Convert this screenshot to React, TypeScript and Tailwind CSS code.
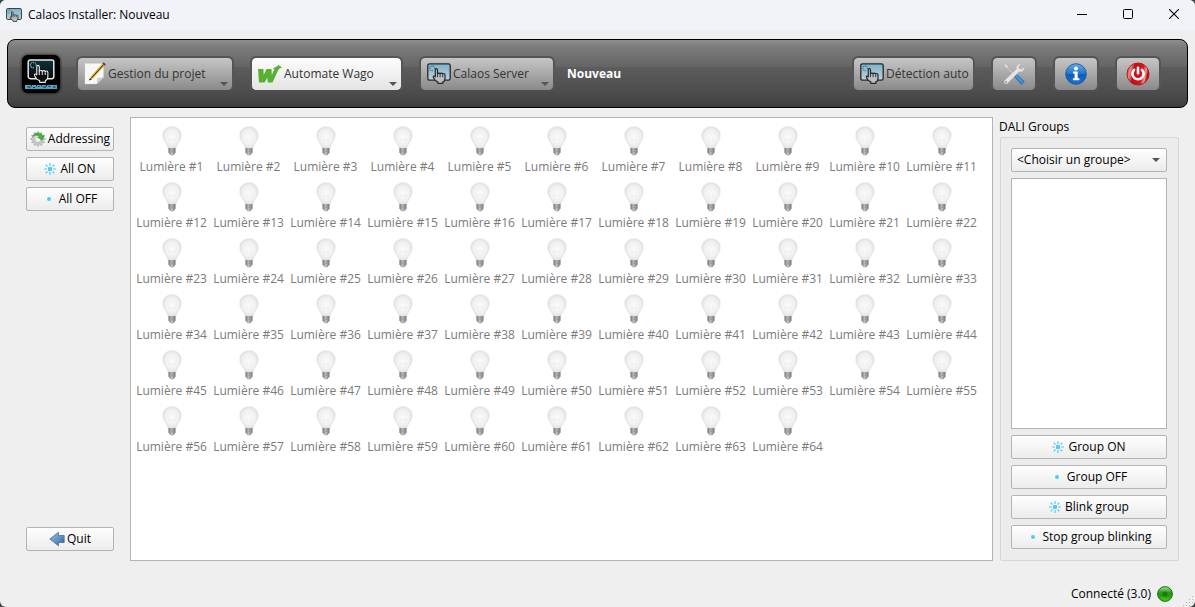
import React from "react";

const lights = Array.from({ length: 64 }, (_, i) => `Lumière #${i + 1}`);

function HandIcon({ className, light = false }: { className: string; light?: boolean }) {
  const line = light ? "#e8e8e8" : "#26292b";
  return (
    <svg viewBox="0 0 24 21" className={className} aria-hidden="true">
      <defs>
        <linearGradient id={light ? "screenDark" : "screenBlue"} x1="0" y1="0" x2="0" y2="1">
          <stop offset="0" stopColor={light ? "#123039" : "#79b5cc"} />
          <stop offset="1" stopColor={light ? "#070b0c" : "#c2d0d5"} />
        </linearGradient>
      </defs>
      <rect x="0.8" y="0.8" width="22.4" height="16.4" rx="1.8" fill={light ? "url(#screenDark)" : "url(#screenBlue)"} stroke={line} strokeWidth="1.3" />
      <g fill={light ? "#8fd0e4" : "#2f6478"}>
        <circle cx="5.2" cy="2.9" r="0.6" />
        <circle cx="5.2" cy="7.7" r="0.6" />
        <circle cx="2.8" cy="5.3" r="0.6" />
        <circle cx="7.6" cy="5.3" r="0.6" />
        <circle cx="3.5" cy="3.6" r="0.6" />
        <circle cx="6.9" cy="3.6" r="0.6" />
        <circle cx="3.5" cy="7" r="0.6" />
      </g>
      <path
        d="M8.3 13.8V6.9q0-1.3 1.1-1.3t1.1 1.3v4.2q.2-1 1.3-1t1.3.9q.4-.8 1.3-.8t1.3.9q.4-.7 1.2-.6 1.1.1 1.1 1.3v3.6q0 3-2.2 3.5v1.5h-5v-1.5q-3-.8-4.3-4.1-.5-1.5.4-1.7.8-.1 1.4.7z"
        fill={light ? "#0b0f10" : "#b9bfc1"}
        stroke={line}
        strokeWidth={light ? "1" : "1.2"}
        strokeLinejoin="round"
      />
      <path d="M10.5 11v3M13.1 11.4v2.7M15.7 11.7v2.4" stroke={line} strokeWidth="0.9" />
    </svg>
  );
}

function BulbIcon() {
  return (
    <svg viewBox="0 0 20 30" className="h-[30px] w-5" aria-hidden="true">
      <defs>
        <radialGradient id="bulbGlass" cx="0.5" cy="0.5" r="0.6">
          <stop offset="0" stopColor="#fafafa" />
          <stop offset="0.6" stopColor="#f0f0f0" />
          <stop offset="1" stopColor="#d8d8d8" />
        </radialGradient>
        <linearGradient id="bulbCap" x1="0" x2="1">
          <stop offset="0" stopColor="#6c6c6c" />
          <stop offset="0.4" stopColor="#c4c4c4" />
          <stop offset="1" stopColor="#777" />
        </linearGradient>
      </defs>
      <path d="M10 .7c5.200 0 9.200 3.700 9.200 8.700 0 5.300-4.500 8-5.400 12.800H6.200C5.300 17.400.8 14.700.8 9.400.8 4.400 4.800.7 10 .7z" fill="url(#bulbGlass)" stroke="#e0e0e0" strokeWidth="0.7" />
      <path d="M7.300 13l1.200 1M12.700 13l-1.200 1" stroke="#dcdcdc" strokeWidth="0.9" />
      <path d="M6.500 22h7v4.200L12 28.800q-2 1.400-4 0l-1.500-2.600z" fill="url(#bulbCap)" />
      <path d="M6.500 23.900l7-.5M6.700 26l6.600-.5" stroke="#8b8b8b" strokeWidth="0.6" />
    </svg>
  );
}

function SparkIcon() {
  return (
    <svg viewBox="0 0 12 12" className="mr-1 size-3" aria-hidden="true" fill="#4fcbfb">
      <rect x="4" y="4" width="4" height="4" rx="1" />
      <path d="M5.400 0h1.200v3H5.400zM5.400 9h1.200v3H5.400zM0 5.400h3v1.200H0zM9 5.400h3v1.200H9z" />
      <path d="M2 1.200l1.900 1.900-.8.8-1.900-1.900zM10 1.200l.8.8-1.900 1.900-.8-.8zM1.200 10l1.900-1.900.8.8-1.900 1.900zM10.800 10l-.8.8-1.900-1.900.8-.8z" />
    </svg>
  );
}

function DotIcon() {
  return (
    <svg viewBox="0 0 12 12" className="mr-1 size-3" aria-hidden="true">
      <circle cx="6" cy="6" r="2" fill="#4fcbfb" />
    </svg>
  );
}

function GearIcon() {
  const teeth = Array.from({ length: 12 }, (_, i) => i * 30);
  return (
    <svg viewBox="0 0 16 16" className="mr-0.5 size-4 shrink-0" aria-hidden="true">
      {teeth.map((a) => (
        <rect key={a} x="7" y="0.5" width="2" height="3.500" fill="#b3b3bb" transform={`rotate(${a} 8 8)`} />
      ))}
      <circle cx="8" cy="8" r="4.800" fill="none" stroke="#c3c3ca" strokeWidth="3" />
      <circle cx="8" cy="8.500" r="2.800" fill="#fafafa" stroke="#a5a5ac" strokeWidth="0.600" />
      <path d="M2.600 5.600C4.600 1 10.500.8 12.700 5l1.600-.3-2.300 4.600-4.300-3 2-.5C8.300 3.800 5 3.600 2.600 5.600z" fill="#42b638" stroke="#288c25" strokeWidth="0.5" />
    </svg>
  );
}

function NoteIcon() {
  return (
    <svg viewBox="0 0 22 24" className="h-6 w-[22px] shrink-0" aria-hidden="true">
      <path d="M2 22.500h12" stroke="#777" strokeOpacity=".5" strokeWidth="1.500" />
      <path d="M1 1.500h18.500v14L13 22H1z" fill="#f8f8f6" stroke="#d8d8d8" strokeWidth="0.5" />
      <path d="M19.500 15.500c-2 1-4.500 1-6 .7.600 2 .4 4-.5 5.800z" fill="#d2d2d0" stroke="#aaa" strokeWidth="0.500" />
      <path d="M5.300 18.300l1.400-3.500L18.300 1.700l2.400 2L8.700 16.600z" fill="#e1ac36" />
      <path d="M7.500 16L19.500 2.600" stroke="#37321f" strokeWidth="1" />
      <path d="M5 18.600l1-2.600 1.800 1.500z" fill="#222" />
      <path d="M18.300 1.700L19.600.3l2.300 2-1.200 1.400z" fill="#54413d" />
    </svg>
  );
}

function WagoIcon() {
  return (
    <svg viewBox="0 0 24 18" className="h-[18px] w-6 shrink-0" aria-hidden="true">
      <path d="M0 4h5.400l.3 6L8.600 4h4.900l.3 6 2.700-6-2-.5Q18 2.500 20.500 0L24 2.500q-2.800.5-4 3L14.500 17.500H9.800l-.5-5-2.600 5H1z" fill="#58b031" />
    </svg>
  );
}

function ToolsIcon() {
  return (
    <svg viewBox="0 0 22 22" className="size-[22px]" aria-hidden="true">
      <path d="M1.200 1.800l1.600-.8 2 2.200-.1 1.200 8 8.300-.7.800L4.200 5l-1.200-.2z" fill="#eeeeee" stroke="#aaa" strokeWidth=".5" />
      <path d="M10.800 13l2.200-2.200 8.300 7.700-2.700 3z" fill="#3182cd" stroke="#2164a2" strokeWidth=".6" />
      <path d="M13 12.700l6.500 6.300" stroke="#6db2ea" strokeWidth="1" />
      <path d="M18.500.8L15.800 3.400l.5 2.200 2.200.5 2.800-2.700c.8 3.500-1.900 6.300-5.200 5.300L4.500 20.400q-1.500 1.100-2.800-.1t-.2-2.800L13.400 6C12.500 2.700 15 0 18.500.8z" fill="#e6e6e6" stroke="#b2b2b2" strokeWidth=".6" />
      <circle cx="3.100" cy="18.900" r=".9" fill="#909090" />
    </svg>
  );
}

function InfoIcon() {
  return (
    <svg viewBox="0 0 22 22" className="size-[22px]" aria-hidden="true">
      <defs>
        <linearGradient id="infoBall" x1="0" y1="0" x2="0" y2="1">
          <stop offset="0" stopColor="#65a9e9" />
          <stop offset="0.48" stopColor="#2377cc" />
          <stop offset="0.52" stopColor="#0d5ebc" />
          <stop offset="1" stopColor="#1b72ce" />
        </linearGradient>
      </defs>
      <circle cx="11" cy="11" r="10.300" fill="url(#infoBall)" stroke="#1656a0" strokeWidth="0.900" />
      <circle cx="11" cy="5.500" r="2" fill="#fff" />
      <path d="M8 8.600h4.700v6.600h1.700v2H7.900v-2h1.700v-4.600H8z" fill="#fff" />
    </svg>
  );
}

function PowerIcon() {
  return (
    <svg viewBox="0 0 24 24" className="size-6" aria-hidden="true">
      <defs>
        <linearGradient id="powerBall" x1="0" y1="0" x2="1" y2="0.2">
          <stop offset="0" stopColor="#b70d12" />
          <stop offset="0.2" stopColor="#f08c8c" />
          <stop offset="0.36" stopColor="#c20f15" />
          <stop offset="0.75" stopColor="#d2191e" />
          <stop offset="0.9" stopColor="#f09a9a" />
          <stop offset="1" stopColor="#b20d12" />
        </linearGradient>
      </defs>
      <circle cx="12" cy="12" r="11" fill="url(#powerBall)" stroke="#ad1519" strokeWidth="0.900" />
      <path d="M8 7.800a5.600 5.600 0 1 0 8 0" fill="none" stroke="#fff" strokeWidth="2.600" strokeLinecap="round" />
      <path d="M12 5.700v5.500" stroke="#fff" strokeWidth="2.600" strokeLinecap="round" />
    </svg>
  );
}

function BackIcon() {
  return (
    <svg viewBox="0 0 16 16" className="mr-0.5 size-4" aria-hidden="true">
      <defs>
        <linearGradient id="backArrow" x1="0" y1="0" x2="1" y2="1">
          <stop offset="0" stopColor="#9fbddd" />
          <stop offset="0.6" stopColor="#5c8dc2" />
          <stop offset="1" stopColor="#2c548c" />
        </linearGradient>
      </defs>
      <path d="M.8 8L9.500 1.200v3.300h5.700v7H9.500v3.300z" fill="url(#backArrow)" stroke="#48709f" strokeWidth="0.800" strokeLinejoin="round" />
    </svg>
  );
}

function LedIcon() {
  return (
    <svg viewBox="0 0 16 16" className="size-4" aria-hidden="true">
      <defs>
        <linearGradient id="ledBall" x1="0" y1="0" x2="0" y2="1">
          <stop offset="0" stopColor="#a5e3a0" />
          <stop offset="0.4" stopColor="#2b9c1c" />
          <stop offset="0.6" stopColor="#1f9f05" />
          <stop offset="1" stopColor="#46d414" />
        </linearGradient>
      </defs>
      <circle cx="8" cy="8" r="7.400" fill="url(#ledBall)" stroke="#1d6b16" strokeWidth="1" />
      <circle cx="8" cy="8" r="2.600" fill="#1d6a17" fillOpacity=".75" />
    </svg>
  );
}

function Caret({ className }: { className: string }) {
  return (
    <svg viewBox="0 0 8 4" className={className} aria-hidden="true">
      <path d="M0 0h8L4 4z" fill="#555" />
    </svg>
  );
}

function ToolButton({ children, width, active = false, menu = false, label }: { children: React.ReactNode; width: string; active?: boolean; menu?: boolean; label?: string }) {
  const tone = active
    ? "bg-[linear-gradient(#fdfdfd,#e4e4e4)]"
    : "bg-[linear-gradient(#c6c6c6,#8a8a8a)]";
  return (
    <button
      type="button"
      aria-label={label}
      className={`relative flex h-9 shrink-0 items-center rounded-md border-2 border-[#555] border-b-[#4e4e4e] bg-clip-padding text-[#333] ${tone} ${width} ${label ? "justify-center" : "gap-0.5 pl-1.5"}`}
    >
      {children}
      {menu && <Caret className="absolute right-1 bottom-1 h-1 w-2" />}
    </button>
  );
}

function PushButton({ children, className = "" }: { children: React.ReactNode; className?: string }) {
  return (
    <button
      type="button"
      className={`flex h-6 w-full shrink-0 items-center justify-center rounded-xs border border-[#b4b4b4] bg-linear-to-b from-[#fefefe] to-[#ececec] whitespace-nowrap text-black ${className}`}
    >
      {children}
    </button>
  );
}

export default function App() {
  return (
    <div className="min-h-screen bg-[#444] font-['Open_Sans',sans-serif] text-xs">
      <div className="flex min-h-screen flex-col overflow-hidden rounded-md bg-[#efefef]">
        <header className="flex h-[30px] shrink-0 items-center bg-[#f1f3f8]">
          <HandIcon className="mr-1.5 ml-1.5 h-3.5 w-4" />
          <h1 className="flex-1 text-black">Calaos Installer: Nouveau</h1>
          <div className="flex gap-1 self-stretch pb-0.5">
            <button type="button" aria-label="Réduire" className="flex w-[42px] items-center justify-center">
              <svg viewBox="0 0 10 10" className="size-2.5"><path d="M0 5.500h10" stroke="#000" /></svg>
            </button>
            <button type="button" aria-label="Agrandir" className="flex w-[42px] items-center justify-center">
              <svg viewBox="0 0 10 10" className="size-2.5"><rect x=".5" y=".5" width="9" height="9" rx="1" fill="none" stroke="#000" /></svg>
            </button>
            <button type="button" aria-label="Fermer" className="flex w-[42px] items-center justify-center">
              <svg viewBox="0 0 10 10" className="size-2.5"><path d="M0 0l10 10M10 0L0 10" stroke="#000" strokeWidth="1.100" /></svg>
            </button>
          </div>
        </header>

        <nav className="mx-[7px] mt-[9px] flex h-[69px] shrink-0 items-center gap-4 rounded-lg border border-black bg-[linear-gradient(#8e8e8e,#7c7c7c_10%,#646464_40%,#5c5c5c_41%,#484848_88%,#3c3c3c)] pr-[26px] pl-3.5">
          <div className="flex h-[38px] w-[38px] shrink-0 flex-col items-center justify-between rounded-md bg-black pt-1 pb-1 shadow-[0_0_3px_#000]">
            <HandIcon light className="h-6 w-7" />
            <svg viewBox="0 0 32 4" className="h-1 w-8" aria-hidden="true">
              <path d="M0 0h32v4H0z" fill="#4fa6c8" />
              <path d="M2.500 2h3M8 2.500h2M13 1.500h1.500M18 2h3M23.500 1.500h2M28 2h2.500M6.500 0v1.500M11.500 0v1.500M16.500 0v1.500M21.500 0v1.500" stroke="#071a22" strokeWidth="0.900" />
            </svg>
          </div>
          <ToolButton width="w-[158px]" menu>
            <NoteIcon />
            <span className="whitespace-nowrap">Gestion du projet</span>
          </ToolButton>
          <ToolButton width="w-[153px]" active menu>
            <WagoIcon />
            <span className="whitespace-nowrap">Automate Wago</span>
          </ToolButton>
          <div className="flex flex-1 items-center gap-3">
            <ToolButton width="w-[136px]" menu>
              <HandIcon className="h-[21px] w-6 shrink-0" />
              <span className="whitespace-nowrap">Calaos Server</span>
            </ToolButton>
            <strong className="font-bold text-white">Nouveau</strong>
          </div>
          <ToolButton width="w-[123px]">
            <HandIcon className="h-[21px] w-6 shrink-0" />
            <span className="whitespace-nowrap">Détection auto</span>
          </ToolButton>
          <ToolButton width="w-[46px]" label="Outils"><ToolsIcon /></ToolButton>
          <ToolButton width="w-[46px]" label="Informations"><InfoIcon /></ToolButton>
          <ToolButton width="w-[46px]" label="Quitter"><PowerIcon /></ToolButton>
        </nav>

        <main className="flex flex-1 pt-[9px] pr-4 pl-[26px]">
          <aside className="mr-4 flex w-[88px] shrink-0 flex-col gap-1.5 pt-2.5 pb-2.5">
            <PushButton><GearIcon />Addressing</PushButton>
            <PushButton><SparkIcon />All ON</PushButton>
            <PushButton><DotIcon />All OFF</PushButton>
            <PushButton className="mt-auto"><BackIcon />Quit</PushButton>
          </aside>

          <ul className="grid flex-1 grid-cols-[repeat(auto-fill,77px)] content-start border border-[#b4b4b4] bg-white px-0.5 py-1 text-[#7b7b7b]">
            {lights.map((name) => (
              <li key={name} className="flex h-14 flex-col items-center pt-1 whitespace-nowrap">
                <BulbIcon />
                <span className="mt-[3px]">{name}</span>
              </li>
            ))}
          </ul>

          <section className="ml-1.5 flex w-[180px] shrink-0 flex-col">
            <h2 className="h-5 pt-0.5 text-black"><label htmlFor="group">DALI Groups</label></h2>
            <div className="ml-px flex flex-1 flex-col gap-1.5 rounded-xs border border-[#d6d6d6] bg-[#ececec] pt-2.5 pr-[11px] pb-[11px] pl-2.5">
              <div className="relative">
                <select
                  id="group"
                  className="block h-6 w-full appearance-none rounded-xs border border-[#b4b4b4] bg-linear-to-b from-[#fefefe] to-[#ececec] pl-[5px] text-black"
                >
                  <option>&lt;Choisir un groupe&gt;</option>
                </select>
                <Caret className="pointer-events-none absolute top-2.5 right-[7px] h-1 w-2" />
              </div>
              <div className="flex-1 border border-[#b4b4b4] bg-white" />
              <PushButton><SparkIcon />Group ON</PushButton>
              <PushButton><DotIcon />Group OFF</PushButton>
              <PushButton><SparkIcon />Blink group</PushButton>
              <PushButton><DotIcon />Stop group blinking</PushButton>
            </div>
          </section>
        </main>

        <footer className="relative flex h-[46px] shrink-0 items-end justify-end gap-1.5 pr-[22px] pb-[5px] text-black">
          <span>Connecté (3.0)</span>
          <LedIcon />
          <svg viewBox="0 0 12 12" className="absolute right-0 bottom-0 size-3" aria-hidden="true" fill="#b5b5b5">
            <path d="M9 1h1v1H9zM6 4h1v1H6zM9 4h1v1H9zM3 7h1v1H3zM6 7h1v1H6zM9 7h1v1H9zM0 10h1v1H0zM3 10h1v1H3zM6 10h1v1H6zM9 10h1v1H9z" />
          </svg>
        </footer>
      </div>
    </div>
  );
}
